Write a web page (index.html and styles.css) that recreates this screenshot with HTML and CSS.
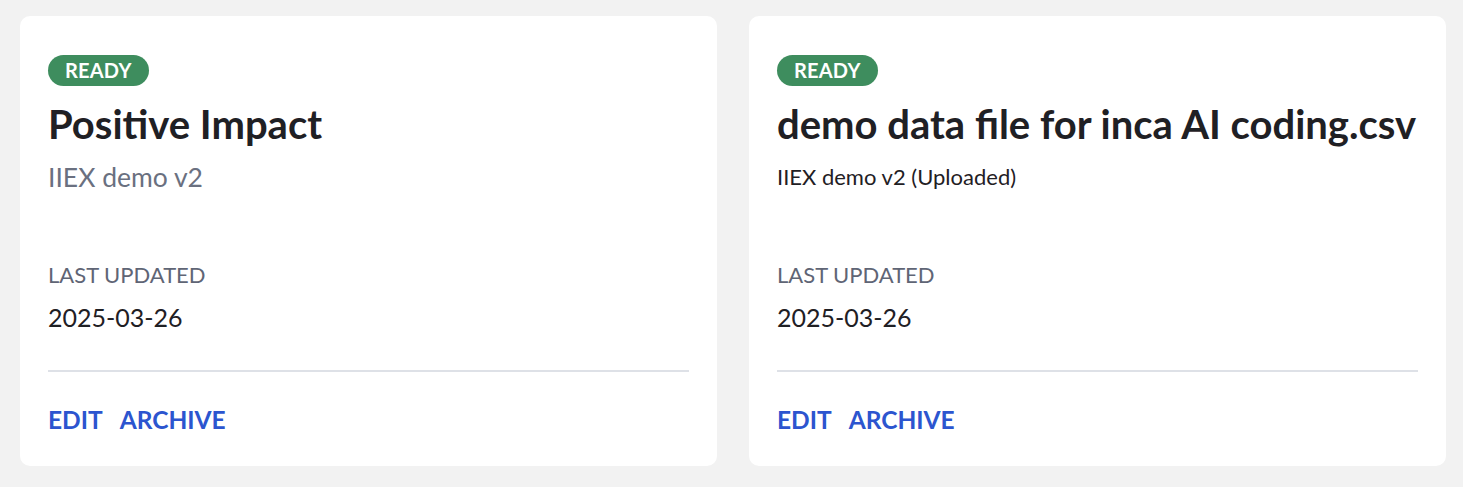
FILE: index.html
```html
<!DOCTYPE html>
<html lang="en">
<head>
  <meta charset="UTF-8" />
  <meta name="viewport" content="width=device-width, initial-scale=1.0"/>
  <title>Datasets</title>
  <link rel="stylesheet" href="styles.css">
</head>
<body>

  <div class="grid">
    <div class="card">
      <span class="badge">READY</span>
      <h2 class="title">Positive Impact</h2>
      <p class="subtitle">IIEX demo v2</p>
      <div class="label">LAST UPDATED</div>
      <div class="date">2025-03-26</div>
      <div class="actions">
        <a href="#" class="action">EDIT</a>
        <a href="#" class="action">ARCHIVE</a>
      </div>
    </div>

    <div class="card">
      <span class="badge">READY</span>
      <h2 class="title">demo data file for inca AI coding.csv</h2>
      <p class="subtitle subtitle-dark">IIEX demo v2 (Uploaded)</p>
      <div class="label">LAST UPDATED</div>
      <div class="date">2025-03-26</div>
      <div class="actions">
        <a href="#" class="action">EDIT</a>
        <a href="#" class="action">ARCHIVE</a>
      </div>
    </div>
  </div>

</body>
</html>
```

FILE: styles.css
```css
body {
  font-family: 'Lato', 'Open Sans', sans-serif;
  background-color: #f2f2f2;
  margin: 0;
  padding: 16px 17px 20px 20px;
  color: #1f2024;
}
.grid {
  display: grid;
  grid-template-columns: 1fr 1fr;
  gap: 32px;
}
.card {
  display: flex;
  flex-direction: column;
  align-items: flex-start;
  background-color: #ffffff;
  border-radius: 10px;
  padding: 39px 28px 0 28px;
  height: 450px;
  box-sizing: border-box;
}
.badge {
  background-color: #3e8d5e;
  color: #ffffff;
  font-weight: 700;
  font-size: 20px;
  line-height: 31px;
  height: 31px;
  padding: 0 17px;
  border-radius: 16px;
  letter-spacing: 0.2px;
}
.title {
  font-size: 40px;
  font-weight: 700;
  line-height: 48px;
  margin: 14px 0 0 0;
  color: #1f2024;
}
.subtitle {
  font-size: 26.5px;
  line-height: 32px;
  margin: 13px 0 0 0;
  color: #6a7080;
}
.subtitle-dark {
  font-size: 22px;
  color: #1f2024;
}
.label {
  font-size: 22px;
  line-height: 28px;
  margin-top: 68px;
  color: #5f6575;
}
.date {
  font-size: 25px;
  line-height: 32px;
  margin-top: 12px;
}
.actions {
  align-self: stretch;
  border-top: 2px solid #dee1e7;
  margin-top: 37px;
  padding-top: 33px;
  display: flex;
  gap: 17px;
}
.action {
  color: #2c55cf;
  font-weight: 700;
  font-size: 24.5px;
  text-decoration: none;
}
```
